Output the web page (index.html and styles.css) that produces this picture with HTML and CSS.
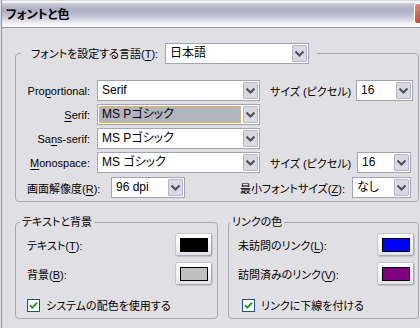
FILE: index.html
```html
<!DOCTYPE html>
<html lang="ja">
<head>
    <meta charset="UTF-8">
    <title>フォントと色</title>
    <link rel="stylesheet" href="styles.css">
</head>
<body>

<div class="window">
    <!-- Title bar -->
    <div class="titlebar">
        <span class="title">フォントと色</span>
        <span class="close">
            <svg width="21" height="21" viewBox="0 0 21 21">
                <path d="M6 6 L15 15 M15 6 L6 15" stroke="#fff" stroke-width="2.4" fill="none"/>
            </svg>
        </span>
    </div>

    <div class="content">
        <!-- Fonts group -->
        <fieldset class="group fonts">
            <legend class="lang">
                <span class="lang-label">フォントを設定する言語(<u>T</u>):</span>
                <div class="combo lang-combo"><span class="value">日本語</span><span class="drop"></span></div>
            </legend>

            <div class="font-grid">
                <span class="name">Pro<u>p</u>ortional:</span>
                <div class="combo"><span class="value">Serif</span><span class="drop"></span></div>
                <span class="size-label">サイズ (ピクセル)</span>
                <div class="combo size"><span class="value">16</span><span class="drop"></span></div>

                <span class="name"><u>S</u>erif:</span>
                <div class="combo focused"><span class="value">MS Pゴシック</span><span class="drop"></span></div>
                <span></span><span></span>

                <span class="name">Sa<u>n</u>s-serif:</span>
                <div class="combo"><span class="value">MS Pゴシック</span><span class="drop"></span></div>
                <span></span><span></span>

                <span class="name"><u>M</u>onospace:</span>
                <div class="combo"><span class="value">MS ゴシック</span><span class="drop"></span></div>
                <span class="size-label">サイズ (ピクセル)</span>
                <div class="combo size mono"><span class="value">16</span><span class="drop"></span></div>
            </div>

            <div class="res-row">
                <span class="res-label">画面解像度(<u>R</u>):</span>
                <div class="combo res"><span class="value">96 dpi</span><span class="drop"></span></div>
                <span class="min-label">最小フォントサイズ(<u>Z</u>):</span>
                <div class="combo min"><span class="value">なし</span><span class="drop"></span></div>
            </div>
        </fieldset>

        <div class="lower">
            <!-- Text and background -->
            <fieldset class="group colors">
                <legend>テキストと背景</legend>
                <div class="color-row">
                    <span>テキスト(<u>T</u>):</span>
                    <span class="color-btn"><span class="swatch" style="background:#000000"></span></span>
                </div>
                <div class="color-row">
                    <span>背景(<u>B</u>):</span>
                    <span class="color-btn"><span class="swatch" style="background:#c0c0c0"></span></span>
                </div>
                <div class="check">
                    <svg width="13" height="13" viewBox="0 0 13 13">
                        <rect x="0.5" y="0.5" width="12" height="12" fill="#fff" stroke="#1c5180"/>
                        <path d="M3 6.2 L5.3 8.6 L10 3.8" stroke="#21a121" stroke-width="2" fill="none"/>
                    </svg>
                    <span>システムの配色を使用する</span>
                </div>
            </fieldset>

            <!-- Link colours -->
            <fieldset class="group links">
                <legend>リンクの色</legend>
                <div class="color-row">
                    <span>未訪問のリンク(<u>L</u>):</span>
                    <span class="color-btn"><span class="swatch" style="background:#0000ff"></span></span>
                </div>
                <div class="color-row">
                    <span>訪問済みのリンク(<u>V</u>):</span>
                    <span class="color-btn"><span class="swatch" style="background:#800080"></span></span>
                </div>
                <div class="check">
                    <svg width="13" height="13" viewBox="0 0 13 13">
                        <rect x="0.5" y="0.5" width="12" height="12" fill="#fff" stroke="#1c5180"/>
                        <path d="M3 6.2 L5.3 8.6 L10 3.8" stroke="#21a121" stroke-width="2" fill="none"/>
                    </svg>
                    <span>リンクに下線を付ける</span>
                </div>
            </fieldset>
        </div>
    </div>
</div>

</body>
</html>
```

FILE: styles.css
```css
body {
    margin: 0;
    overflow: hidden;
    background: #e0dfe3;
    color: #000;
    font-family: "Liberation Sans", "Noto Sans CJK JP", sans-serif;
    font-size: 11px;
    font-feature-settings: "palt";
    white-space: nowrap;
}
u {
    text-decoration-thickness: 1px;
    text-underline-offset: 2px;
}
.window {
    width: 437px;
    margin-left: 1px;
    border-left: 1px solid #8f8f9d;
    height: 328px;
}

/* title bar */
.titlebar {
    height: 27px;
    display: flex;
    align-items: center;
    justify-content: space-between;
    padding-left: 4px;
    border-bottom: 1px solid #9897a7;
    background: linear-gradient(#a9a9b8 0, #ffffff 1px, #fbfbfd 2px, #c6c6d6 4px, #b0b0c5 9px, #b9b9cb 14px, #dadae5 20px, #f3f3f7 24px, #fbfbfd 27px);
}
.title {
    font-weight: bold;
    font-size: 12px;
}
.close {
    width: 21px;
    height: 21px;
    margin-right: 4px;
    border: 1px solid #fff;
    border-radius: 3px;
    background: linear-gradient(135deg, #e88f7f, #c8432e 60%, #b1321f);
    box-sizing: border-box;
    display: flex;
    align-items: center;
    justify-content: center;
}

.content {
    padding: 15px 0 0 13px;
}

/* group boxes */
.group {
    margin: 0;
    border: 1px solid #a8a8b0;
    border-radius: 4px;
    min-width: 0;
    box-sizing: border-box;
}
.group legend {
    line-height: 14px;
}

.fonts {
    width: 404px;
    padding: 0 0 3px 8px;
}
.fonts legend.lang {
    display: flex;
    align-items: center;
    margin-left: -3px;
    padding: 0 8px 0 10px;
    line-height: 20px;
}
.lang-label {
    width: 131px;
}
.lang-combo {
    width: 144px;
    margin-left: 3px;
}

/* combobox */
.combo {
    height: 21px;
    display: flex;
    box-sizing: border-box;
    border: 1px solid #a4a4b0;
    background: #fff;
    font-size: 12px;
}
.combo .value {
    flex: 1;
    padding-left: 4px;
    line-height: 19px;
}
.combo .drop {
    width: 15px;
    margin: 1px;
    box-sizing: border-box;
    border: 1px solid #b6b6c8;
    border-radius: 1px;
    background: #d9d9e4 url("data:image/svg+xml,%3Csvg xmlns='http://www.w3.org/2000/svg' width='13' height='15'%3E%3Cpath d='M2.5 5.5 L6.5 9.5 L10.5 5.5' stroke='%234d4d55' stroke-width='2' fill='none'/%3E%3C/svg%3E") center no-repeat;
}
.combo.focused .value {
    margin: 1px;
    padding-left: 3px;
    line-height: 17px;
    background: #b4b4be;
    outline: 1px dotted #e3b557;
    outline-offset: -1px;
}
.lang-combo .value {
    line-height: 18px;
}

.font-grid {
    margin-top: 16px;
    display: grid;
    grid-template-columns: 73px 173px 86px 57px;
    grid-auto-rows: 21px;
    row-gap: 3px;
    align-items: center;
}
.font-grid .name {
    text-align: right;
    padding-right: 7px;
}
.font-grid .combo {
    width: 163px;
}
.font-grid .combo.size {
    width: 57px;
}
.font-grid .combo.mono {
    width: 54px;
    margin-left: 1px;
}

.res-row {
    margin-top: 4px;
    display: flex;
    align-items: center;
}
.res-label {
    width: 84px;
    padding-left: 3px;
}
.combo.res {
    width: 74px;
}
.min-label {
    margin-left: auto;
    margin-right: 7px;
}
.combo.min {
    width: 59px;
    margin-right: 7px;
}

/* lower groups */
.lower {
    margin-top: 13px;
    display: flex;
    gap: 10px;
}
.colors {
    width: 203px;
    padding: 0 4px 5px 11px;
}
.colors legend {
    margin-left: -7px;
    padding: 0 2px;
}
.links {
    width: 191px;
    padding: 0 3px 5px 9px;
}
.links legend {
    margin-left: -8px;
    padding: 0 2px;
}
.color-row {
    height: 24px;
    margin-top: 4px;
    display: flex;
    align-items: center;
    justify-content: space-between;
}
.color-row + .color-row {
    margin-top: 5px;
}
.color-btn {
    width: 38px;
    height: 24px;
    box-sizing: border-box;
    border: 1px solid #c4c4cc;
    border-radius: 3px;
    background: linear-gradient(#ffffff, #f1f1f3 70%, #dcdce2);
    box-shadow: inset -1px -1px #a9a9b2;
    display: flex;
    align-items: center;
    justify-content: center;
}
.swatch {
    width: 28px;
    height: 14px;
    box-sizing: border-box;
    border: 1px solid #000;
}
.check {
    margin-top: 11px;
    display: flex;
    align-items: center;
    gap: 6px;
}
.links .check {
    margin-left: 4px;
}
```
